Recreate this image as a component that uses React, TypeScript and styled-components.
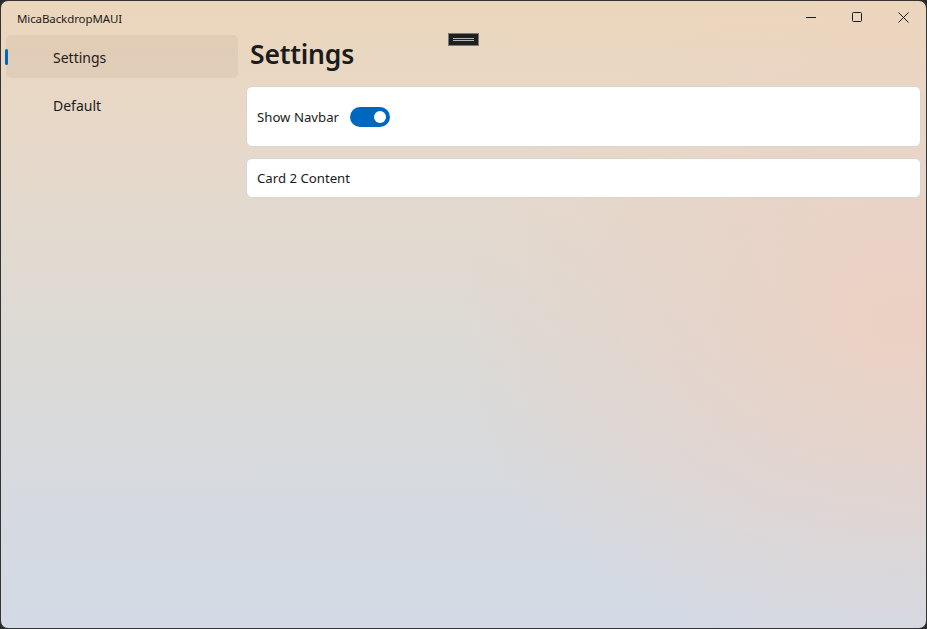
import React, { useState } from "react";
import styled, { createGlobalStyle } from "styled-components";

const Global = createGlobalStyle`
  html, body { margin: 0; padding: 0; background: #2b2b2b; }
  body { font-family: "Noto Sans", "Open Sans", sans-serif; }
  * { box-sizing: border-box; }
`;

const Window = styled.div`
  position: relative;
  width: 927px;
  height: 629px;
  border: 1px solid #333;
  border-radius: 8px;
  overflow: hidden;
  display: grid;
  grid-template-columns: 240px 1fr;
  background:
    radial-gradient(ellipse 620px 480px at 900px 320px, rgba(236, 208, 194, 0.95), rgba(236, 208, 194, 0) 72%),
    linear-gradient(180deg, #ecd6bc 0%, #e6d9cb 25%, #dcdad6 55%, #d5dae2 85%, #d3dae5 100%);
  color: #1b1b1b;
`;

const Sidebar = styled.aside`
  display: flex;
  flex-direction: column;
  padding: 0 3px 0 5px;
`;

const AppTitle = styled.div`
  height: 34px;
  display: flex;
  align-items: center;
  padding-left: 11px;
  font-size: 11.5px;
  color: #1b1b1b;
  letter-spacing: -0.1px;
`;

const NavList = styled.nav`
  display: flex;
  flex-direction: column;
  gap: 5px;
`;

const NavItem = styled.div<{ $active?: boolean }>`
  position: relative;
  height: 43px;
  border-radius: 5px;
  display: flex;
  align-items: center;
  padding: 2px 0 0 47px;
  font-size: 14px;
  color: #1b1b1b;
  background: ${(p) => (p.$active ? "rgba(120, 90, 60, 0.07)" : "transparent")};
  &::before {
    content: "";
    display: ${(p) => (p.$active ? "block" : "none")};
    position: absolute;
    left: -1px;
    top: 14px;
    width: 3px;
    height: 16px;
    border-radius: 2px;
    background: #0067c0;
  }
`;

const Content = styled.main`
  display: flex;
  flex-direction: column;
  padding: 34px 5px 0 5px;
`;

const Heading = styled.h1`
  margin: 0 0 13px 4px;
  font-size: 26.5px;
  font-weight: 600;
  line-height: 38px;
  letter-spacing: -0.2px;
  color: #1b1b1b;
`;

const Cards = styled.div`
  display: flex;
  flex-direction: column;
  gap: 11px;
`;

const Card = styled.div<{ $h: number }>`
  flex: none;
  height: ${(p) => p.$h}px;
  background: #ffffff;
  border: 1px solid #d8d4d0;
  border-radius: 6px;
  display: flex;
  align-items: center;
  gap: 11px;
  padding-left: 10px;
  font-size: 13.2px;
  color: #1b1b1b;
`;

const Toggle = styled.button<{ $on: boolean }>`
  position: relative;
  width: 40px;
  height: 20px;
  border-radius: 10px;
  border: none;
  padding: 0;
  cursor: pointer;
  background: ${(p) => (p.$on ? "#0067c0" : "#8a8a8a")};
  &::after {
    content: "";
    position: absolute;
    top: 4px;
    left: ${(p) => (p.$on ? "24px" : "4px")};
    width: 12px;
    height: 12px;
    border-radius: 50%;
    background: #fff;
  }
`;

const Captions = styled.div`
  position: absolute;
  top: 0;
  right: 0;
  display: flex;
`;

const CaptionButton = styled.div`
  width: 46px;
  height: 32px;
  display: flex;
  align-items: center;
  justify-content: center;
  color: #1b1b1b;
`;

const DragHandle = styled.div`
  position: absolute;
  left: 447px;
  top: 32px;
  width: 31px;
  height: 13px;
  background: #1f1f1f;
  border: 1px solid #7a7a7a;
  display: flex;
  flex-direction: column;
  justify-content: center;
  align-items: center;
  gap: 1px;
  &::before, &::after {
    content: "";
    width: 21px;
    height: 1px;
    background: #b5b5b5;
  }
`;

export default function App() {
  const [on, setOn] = useState(true);
  return (
    <>
      <Global />
      <Window>
        <Sidebar>
          <AppTitle>MicaBackdropMAUI</AppTitle>
          <NavList>
            <NavItem $active>Settings</NavItem>
            <NavItem>Default</NavItem>
          </NavList>
        </Sidebar>
        <Content>
          <Heading>Settings</Heading>
          <Cards>
            <Card $h={61}>
              Show Navbar
              <Toggle $on={on} onClick={() => setOn(!on)} aria-label="Show Navbar" />
            </Card>
            <Card $h={40}>Card 2 Content</Card>
          </Cards>
        </Content>
        <Captions>
          <CaptionButton>
            <svg width="10" height="10" viewBox="0 0 10 10">
              <path d="M0 5.5h10" stroke="#1b1b1b" strokeWidth="1" fill="none" />
            </svg>
          </CaptionButton>
          <CaptionButton>
            <svg width="10" height="10" viewBox="0 0 10 10">
              <rect x="0.5" y="0.5" width="9" height="9" rx="1" stroke="#1b1b1b" strokeWidth="1" fill="none" />
            </svg>
          </CaptionButton>
          <CaptionButton>
            <svg width="11" height="11" viewBox="0 0 11 11">
              <path d="M0.5 0.5l10 10M10.5 0.5l-10 10" stroke="#1b1b1b" strokeWidth="1" fill="none" />
            </svg>
          </CaptionButton>
        </Captions>
        <DragHandle />
      </Window>
    </>
  );
}
